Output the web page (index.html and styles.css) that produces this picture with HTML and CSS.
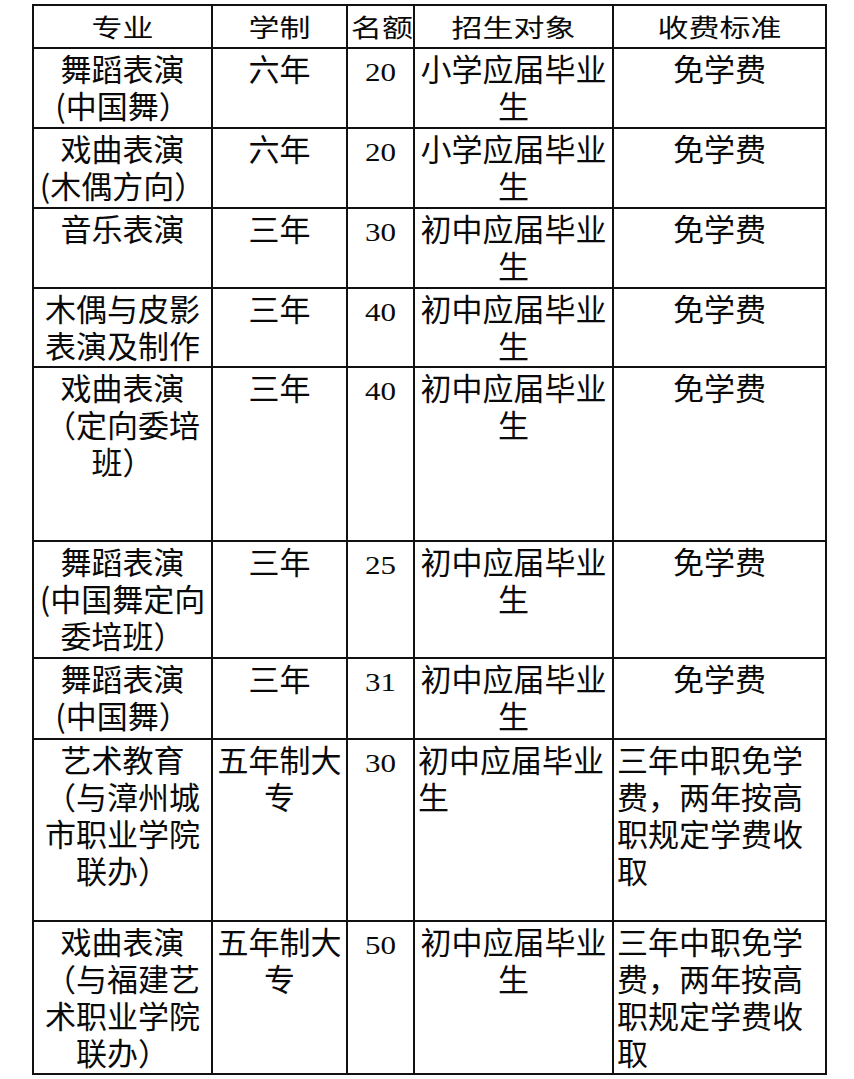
FILE: index.html
```html
<!DOCTYPE html>
<html lang="zh-CN">
<head>
<meta charset="utf-8">
<title>招生计划</title>
<link rel="stylesheet" href="styles.css">
</head>
<body>
<div class="sheet">
<table class="grid">
  <thead>
    <tr class="r-head">
      <th class="c1"><span class="sq">专业</span></th>
      <th class="c2"><span class="sq">学制</span></th>
      <th class="c3"><span class="sq">名额</span></th>
      <th class="c4"><span class="sq">招生对象</span></th>
      <th class="c5"><span class="sq">收费标准</span></th>
    </tr>
  </thead>
  <tbody>
    <tr class="r80">
      <td>舞蹈表演<br>(中国舞）</td>
      <td>六年</td>
      <td><span class="n">20</span></td>
      <td>小学应届毕业<br>生</td>
      <td>免学费</td>
    </tr>
    <tr class="r80">
      <td>戏曲表演<br>(木偶方向）</td>
      <td>六年</td>
      <td><span class="n">20</span></td>
      <td>小学应届毕业<br>生</td>
      <td>免学费</td>
    </tr>
    <tr class="r80">
      <td>音乐表演</td>
      <td>三年</td>
      <td><span class="n">30</span></td>
      <td>初中应届毕业<br>生</td>
      <td>免学费</td>
    </tr>
    <tr class="r79">
      <td>木偶与皮影<br>表演及制作</td>
      <td>三年</td>
      <td><span class="n">40</span></td>
      <td>初中应届毕业<br>生</td>
      <td>免学费</td>
    </tr>
    <tr class="r174">
      <td>戏曲表演<br>（定向委培<br>班）</td>
      <td>三年</td>
      <td><span class="n">40</span></td>
      <td>初中应届毕业<br>生</td>
      <td>免学费</td>
    </tr>
    <tr class="r117">
      <td>舞蹈表演<br>(中国舞定向<br>委培班）</td>
      <td>三年</td>
      <td><span class="n">25</span></td>
      <td>初中应届毕业<br>生</td>
      <td>免学费</td>
    </tr>
    <tr class="r81">
      <td>舞蹈表演<br>(中国舞）</td>
      <td>三年</td>
      <td><span class="n">31</span></td>
      <td>初中应届毕业<br>生</td>
      <td>免学费</td>
    </tr>
    <tr class="r182">
      <td>艺术教育<br>（与漳州城<br>市职业学院<br>联办）</td>
      <td>五年制大<br>专</td>
      <td><span class="n">30</span></td>
      <td class="left">初中应届毕业<br>生</td>
      <td class="left">三年中职免学<br>费，两年按高<br>职规定学费收<br>取</td>
    </tr>
    <tr class="r153">
      <td>戏曲表演<br>（与福建艺<br>术职业学院<br>联办）</td>
      <td>五年制大<br>专</td>
      <td><span class="n">50</span></td>
      <td>初中应届毕业<br>生</td>
      <td class="left">三年中职免学<br>费，两年按高<br>职规定学费收<br>取</td>
    </tr>
  </tbody>
</table>
</div>
</body>
</html>
```
FILE: styles.css
```css
html, body {
  margin: 0;
  padding: 0;
  background: #ffffff;
}

.sheet {
  padding: 4px 0 0 32px;
}

.grid {
  border-collapse: separate;
  border-spacing: 0;
  table-layout: fixed;
  width: 795px;
  border-top: 2px solid #111111;
  border-left: 2px solid #111111;
  font-family: "Noto Sans CJK SC", "Noto Sans", sans-serif;
  font-size: 31px;
  line-height: 37px;
  color: #0a0a0a;
}

.grid th,
.grid td {
  box-sizing: border-box;
  border-right: 2px solid #111111;
  border-bottom: 2px solid #111111;
  padding: 0 3px;
  vertical-align: top;
  text-align: center;
  font-weight: 400;
  white-space: nowrap;
}

.c1 { width: 179px; }
.c2 { width: 135px; }
.c3 { width: 67px; }
.c4 { width: 199px; }
.c5 { width: 213px; }

.grid th {
  vertical-align: middle;
}

.grid td.left {
  text-align: left;
}

.sq {
  display: inline-block;
  transform: scaleY(0.8);
}

.n {
  display: inline-block;
  font-family: "Liberation Serif", "Times New Roman", serif;
  transform: scaleY(0.84);
  transform-origin: 50% 75%;
}

.r-head > * { height: 43px; }
.r79 > * { height: 79px; }
.r80 > * { height: 80px; }
.r81 > * { height: 81px; }
.r117 > * { height: 117px; }
.r153 > * { height: 153px; }
.r174 > * { height: 174px; }
.r182 > * { height: 182px; }
```
